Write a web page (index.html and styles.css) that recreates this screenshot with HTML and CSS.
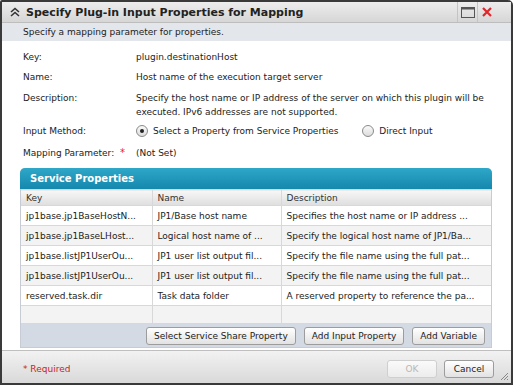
FILE: index.html
```html
<!DOCTYPE html>
<html lang="en">
<head>
    <meta charset="UTF-8">
    <title>Specify Plug-in Input Properties for Mapping</title>
    <link rel="stylesheet" href="styles.css">
</head>
<body>
    <div class="dialog">
        <div class="titlebar">
            <svg class="collapse" width="10" height="10" viewBox="0 0 10 10">
                <path d="M1 5 L5 1.5 L9 5 M1 9 L5 5.5 L9 9" fill="none" stroke="#333" stroke-width="1.6"/>
            </svg>
            <span class="title">Specify Plug-in Input Properties for Mapping</span>
            <div class="win-btns">
                <span class="win-btn">
                    <svg width="14" height="11" viewBox="0 0 14 11"><rect x="0.5" y="0.5" width="13" height="10" fill="none" stroke="#555"/><rect x="1" y="1" width="12" height="1.5" fill="#555"/></svg>
                </span>
                <span class="win-btn">
                    <svg width="10" height="10" viewBox="0 0 10 10"><path d="M1 1 L9 9 M9 1 L1 9" stroke="#e0262b" stroke-width="2.2"/></svg>
                </span>
            </div>
        </div>
        <div class="subtitle">Specify a mapping parameter for properties.</div>

        <div class="content">
            <div class="field">
                <div class="label">Key:</div>
                <div>plugin.destinationHost</div>
            </div>
            <div class="field f-name">
                <div class="label">Name:</div>
                <div>Host name of the execution target server</div>
            </div>
            <div class="field f-desc">
                <div class="label">Description:</div>
                <div>Specify the host name or IP address of the server on which this plugin will be executed. IPv6 addresses are not supported.</div>
            </div>
            <div class="field f-method">
                <div class="label">Input Method:</div>
                <div class="radios">
                    <label class="radio"><span class="dot checked"></span>Select a Property from Service Properties</label>
                    <label class="radio"><span class="dot"></span>Direct Input</label>
                </div>
            </div>
            <div class="field f-param">
                <div class="label">Mapping Parameter: <span class="req">*</span></div>
                <div>(Not Set)</div>
            </div>

            <div class="panel">
                <div class="panel-head">Service Properties</div>
                <table class="props">
                    <colgroup><col class="c-key"><col class="c-name"><col></colgroup>
                    <thead>
                        <tr><th>Key</th><th>Name</th><th>Description</th></tr>
                    </thead>
                    <tbody>
                        <tr><td>jp1base.jp1BaseHostN...</td><td>JP1/Base host name</td><td>Specifies the host name or IP address ...</td></tr>
                        <tr><td>jp1base.jp1BaseLHost...</td><td>Logical host name of ...</td><td>Specify the logical host name of JP1/Ba...</td></tr>
                        <tr><td>jp1base.listJP1UserOu...</td><td>JP1 user list output fil...</td><td>Specify the file name using the full pat...</td></tr>
                        <tr><td>jp1base.listJP1UserOu...</td><td>JP1 user list output fil...</td><td>Specify the file name using the full pat...</td></tr>
                        <tr><td>reserved.task.dir</td><td>Task data folder</td><td>A reserved property to reference the pa...</td></tr>
                        <tr class="empty"><td></td><td></td><td></td></tr>
                    </tbody>
                </table>
                <div class="panel-actions">
                    <button class="btn">Select Service Share Property</button>
                    <button class="btn">Add Input Property</button>
                    <button class="btn">Add Variable</button>
                </div>
            </div>
        </div>

        <div class="footer">
            <span class="required">* Required</span>
            <div class="footer-btns">
                <button class="btn btn-ok" disabled>OK</button>
                <button class="btn btn-cancel">Cancel</button>
            </div>
            <svg class="grip" width="9" height="9" viewBox="0 0 9 9">
                <path d="M8 1 L1 8 M8 4 L4 8 M8 7 L7 8" stroke="#888" stroke-width="1"/>
            </svg>
        </div>
    </div>
</body>
</html>
```

FILE: styles.css
```css
* { box-sizing: border-box; margin: 0; padding: 0; }
body {
    font-family: 'DejaVu Sans', Verdana, sans-serif;
    font-size: 9px;
    color: #222;
    background: #fff;
}
.dialog {
    width: 513px; height: 385px;
    border: 2px solid #3a3a3a; border-radius: 2px 5px 0 0;
    display: flex; flex-direction: column; background: #fff;
}
.titlebar {
    height: 21px; display: flex; align-items: center; padding-left: 8px;
    background: linear-gradient(#ededed, #d6d6d6);
    border-bottom: 1px solid #bdbdbd;
}
.collapse { margin-right: 6px; }
.title { font-weight: bold; font-size: 11px; color: #222; flex: 1; }
.win-btns { display: flex; height: 100%; margin-right: 16px; }
.win-btn {
    display: flex; align-items: center; justify-content: center;
    width: 20px; border-left: 1px solid #c4c4c4;
}
.win-btn:last-child { width: 18px; }
.subtitle {
    height: 18px; line-height: 18px; padding-left: 21px;
    background: #e3e6eb; color: #222;
}
.content { flex: 1; padding: 9px 17px 0 18px; }
.field {
    display: grid; grid-template-columns: 113px 1fr;
    padding-left: 3px; line-height: 14px;
}
.f-name { margin-top: 6px; }
.f-desc { margin-top: 7px; }
.f-method { margin-top: 5px; }
.f-param { margin-top: 8px; }
.req { color: #e0262b; font-size: 10px; margin-left: 3px; }
.radios { display: flex; }
.radio { display: flex; align-items: center; }
.radio + .radio { margin-left: 24px; }
.dot {
    width: 12px; height: 12px; border-radius: 50%; margin-right: 5px;
    border: 1px solid #8a8a8a; background: linear-gradient(#fafafa, #dcdcdc);
    display: flex; align-items: center; justify-content: center;
}
.dot.checked::after {
    content: ""; width: 4px; height: 4px; border-radius: 50%; background: #222;
}
.panel {
    margin-top: 8px; width: 472px;
    border: 1px solid #c7ccd4; border-top: none; border-radius: 5px 5px 0 0;
}
.panel-head {
    height: 21px; line-height: 21px; padding-left: 10px; margin: 0 -1px;
    border-radius: 5px 5px 0 0;
    background: linear-gradient(#2ea7c8, #1588ad);
    color: #fff; font-weight: bold; font-size: 10px;
}
.props { width: 100%; border-collapse: collapse; table-layout: fixed; }
.c-key { width: 131px; }
.c-name { width: 129px; }
.props th, .props td {
    text-align: left; font-weight: normal; padding: 0 5px;
    border: 1px solid #d8d8d8; white-space: nowrap; overflow: hidden;
}
.props tr > :first-child { border-left: none; }
.props tr > :last-child { border-right: none; }
.props th {
    height: 16px; background: linear-gradient(#f7f7f7, #dedede); color: #333;
}
.props td { height: 20px; }
.props tbody tr:nth-child(even) td { background: #f3f3f3; }
.props tr.empty td { height: 18px; }
.panel-actions {
    height: 23px; background: #d4dae3;
    display: flex; justify-content: flex-end; align-items: center;
    gap: 8px; padding-right: 6px;
}
.btn {
    font-family: 'DejaVu Sans', Verdana, sans-serif; font-size: 9px; color: #222;
    height: 18px; padding: 0 7px;
    border: 1px solid #9c9c9c; border-radius: 3px;
    background: linear-gradient(#ffffff, #e2e2e2);
}
.footer {
    flex: 1; display: flex; align-items: center; position: relative;
    border-top: 1px solid #bfbfbf; margin-top: 2px;
    background: linear-gradient(#f2f2f2, #d9d9d9);
    padding: 0 0 0 21px;
}
.required { color: #c8242a; flex: 1; margin-top: 4px; }
.footer-btns { display: flex; gap: 7px; margin-right: 17px; margin-top: 4px; }
.btn-ok { width: 50px; color: #b8b8b8; border-color: #cfcfcf; background: linear-gradient(#fafafa, #ececec); }
.btn-cancel { width: 50px; }
.grip { position: absolute; right: 2px; bottom: 2px; }
```
